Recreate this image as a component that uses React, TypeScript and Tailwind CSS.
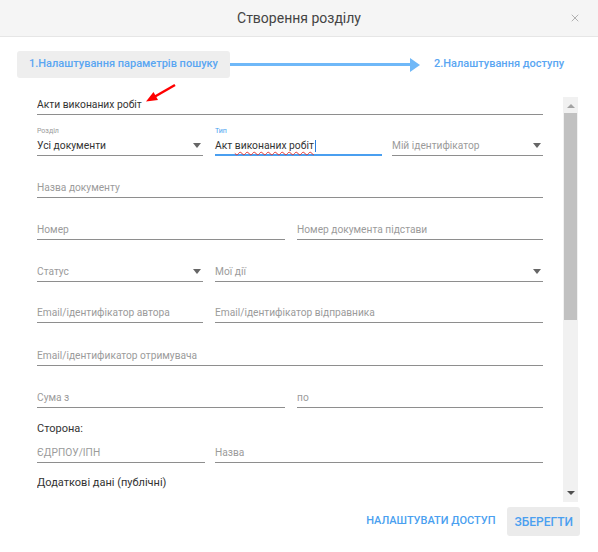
import { X } from "lucide-react";

const font = { fontFamily: "Roboto, 'Liberation Sans', sans-serif" };

const Caret = () => (
  <span className="inline-block w-0 h-0 border-l-[4px] border-r-[4px] border-t-[5px] border-l-transparent border-r-transparent border-t-[#666]" />
);

interface fieldProps {
  w: string;
  text: string;
  value?: boolean;
  label?: string;
  arrow?: boolean;
}

const Field = ({ w, text, value, label, arrow }: fieldProps) => (
  <div className={`flex flex-col ${w}`}>
    {label && <span className="text-[7px] leading-[8px] text-[#9a9a9a] mb-[3px]">{label}</span>}
    <div className="flex items-center justify-between border-b border-[#8e8e8e] pb-[2px] pr-[2px]">
      <span
        className={
          value
            ? "text-[10.3px] leading-[15px] text-[#333]"
            : "text-[10.2px] leading-[15px] text-[#9b9b9b]"
        }
      >
        {text}
      </span>
      {arrow && <Caret />}
    </div>
  </div>
);

const App = () => {
  return (
    <div className="relative w-[598px] h-[552px] bg-white overflow-hidden" style={font}>
      {/* header */}
      <div className="h-[37px] bg-[#f5f5f5] border-b border-[#e6e6e6] flex items-center justify-center relative">
        <span className="text-[14px] text-[#444]">Створення розділу</span>
        <X className="absolute right-[17px] top-[12px] text-[#a0a0a0]" size={12} strokeWidth={1.6} />
      </div>

      {/* steps */}
      <div className="flex items-center mt-[14px] pl-[17px]">
        <div className="h-[27px] w-[213px] bg-[#eeeeee] rounded-[3px] flex items-center justify-center text-[11px] font-medium text-[#5aa6f2]">
          1.Налаштування параметрів пошуку
        </div>
        <div className="h-[3px] w-[180px] bg-[#6fb8f8]" />
        <div className="w-0 h-0 border-t-[7px] border-b-[7px] border-l-[10px] border-t-transparent border-b-transparent border-l-[#6fb8f8]" />
        <span className="ml-[14px] text-[11px] font-medium text-[#5aa6f2]">2.Налаштування доступу</span>
      </div>

      {/* scroll area */}
      <div className="flex mt-[19px] h-[405px]">
        <div className="w-[506px] ml-[37px] overflow-hidden">
          <div className="h-[18px] flex flex-col justify-end">
            <Field w="w-full" text="Акти виконаних робіт" value />
          </div>

          <div className="h-[41px] flex items-end">
            <Field w="w-[166px]" label="Розділ" text="Усі документи" value arrow />
            <div className="flex flex-col w-[167px] ml-[12px]">
              <span className="text-[7px] leading-[8px] text-[#4a9ff0] mb-[3px]">Тип</span>
              <div className="flex items-center border-b-2 border-[#4a9ff0] pb-[1px]">
                <span className="text-[10.3px] leading-[15px] text-[#333]">
                  Акт{" "}
                  <span className="underline decoration-wavy decoration-[#e53935] decoration-1 underline-offset-2">
                    виконаних робіт
                  </span>
                </span>
                <span className="w-px h-[12px] bg-[#2a7fe0] ml-[1px]" />
              </div>
            </div>
            <div className="ml-[10px]">
              <Field w="w-[151px]" text="Мій ідентифікатор" arrow />
            </div>
          </div>

          <div className="h-[42px] flex items-end">
            <Field w="w-full" text="Назва документу" />
          </div>

          <div className="h-[42px] flex items-end gap-[12px]">
            <Field w="w-[248px]" text="Номер" />
            <Field w="w-[246px]" text="Номер документа підстави" />
          </div>

          <div className="h-[42px] flex items-end gap-[12px]">
            <Field w="w-[166px]" text="Статус" arrow />
            <Field w="w-[328px]" text="Мої дії" arrow />
          </div>

          <div className="h-[41px] flex items-end gap-[12px]">
            <Field w="w-[166px]" text="Email/ідентифікатор автора" />
            <Field w="w-[328px]" text="Email/ідентифікатор відправника" />
          </div>

          <div className="h-[43px] flex items-end">
            <Field w="w-full" text="Email/ідентификатор отримувача" />
          </div>

          <div className="h-[42px] flex items-end gap-[12px]">
            <Field w="w-[248px]" text="Сума з" />
            <Field w="w-[246px]" text="по" />
          </div>

          <div className="mt-[13px] text-[11px] leading-[16px] text-[#333]">Сторона:</div>

          <div className="h-[26px] flex items-end gap-[10px]">
            <Field w="w-[168px]" text="ЄДРПОУ/ІПН" />
            <Field w="w-[328px]" text="Назва" />
          </div>

          <div className="mt-[12px] text-[11px] leading-[16px] text-[#333]">Додаткові дані (публічні)</div>
        </div>

        {/* scrollbar */}
        <div className="ml-[20px] w-[15px] bg-[#f1f1f1] flex flex-col items-center">
          <div className="mt-[7px] w-0 h-0 border-l-[4px] border-r-[4px] border-b-[4px] border-l-transparent border-r-transparent border-b-[#a3a3a3]" />
          <div className="mt-[5px] w-[13px] h-[207px] bg-[#c1c1c1]" />
          <div className="mt-auto mb-[7px] w-0 h-0 border-l-[4px] border-r-[4px] border-t-[4px] border-l-transparent border-r-transparent border-t-[#505050]" />
        </div>
      </div>

      {/* footer */}
      <div className="flex items-center justify-end mt-[5px] pr-[18px]">
        <span className="text-[11px] font-medium text-[#4a9ff0] mr-[12px]">НАЛАШТУВАТИ ДОСТУП</span>
        <div className="h-[29px] px-[7px] bg-[#ebebeb] rounded-[3px] flex items-center text-[12px] font-medium text-[#4a9ff0]">
          ЗБЕРЕГТИ
        </div>
      </div>

      {/* red annotation arrow */}
      <svg className="absolute left-0 top-0 pointer-events-none" width="598" height="552">
        <line x1="175" y1="85" x2="155" y2="96.5" stroke="#ff0000" strokeWidth="2.5" />
        <polygon points="146,101.5 158,100 153.5,92" fill="#ff0000" />
      </svg>
    </div>
  );
};

export default App;
